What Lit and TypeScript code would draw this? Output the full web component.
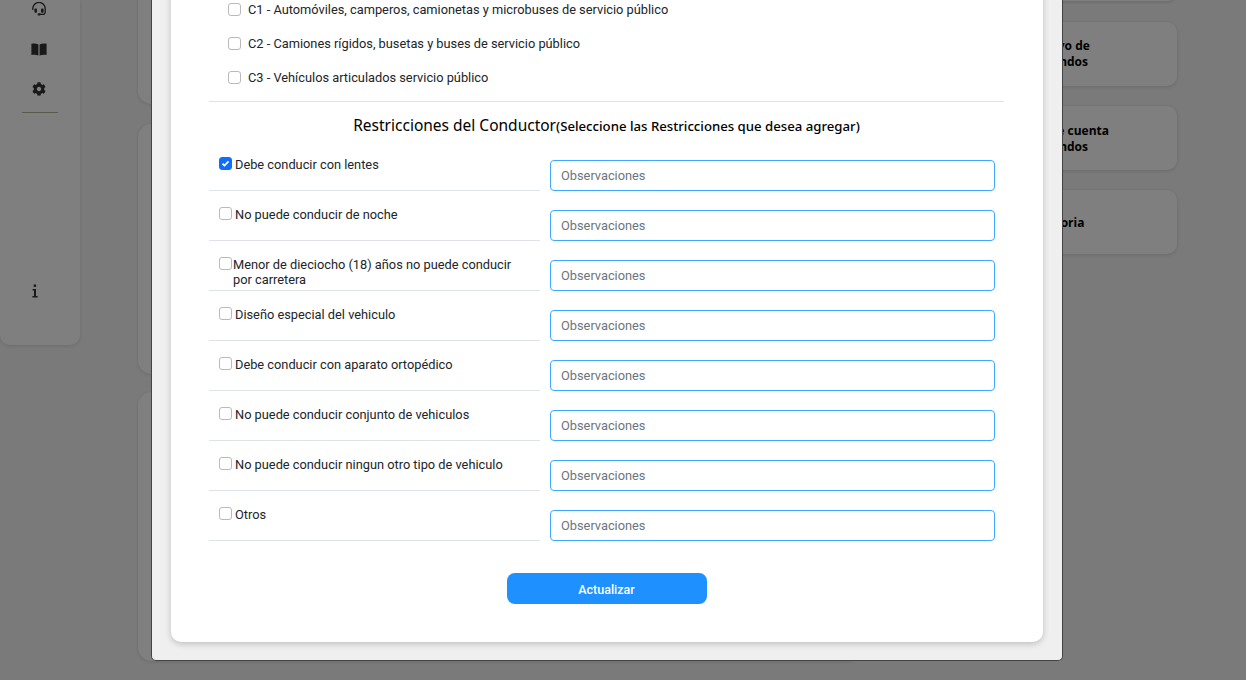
import { LitElement, html, css, svg } from "lit";
import { customElement } from "lit/decorators.js";

const licenses = [
  "C1 - Automóviles, camperos, camionetas y microbuses de servicio público",
  "C2 - Camiones rígidos, busetas y buses de servicio público",
  "C3 - Vehículos articulados servicio público",
];
const restrictions = [
  "Debe conducir con lentes",
  "No puede conducir de noche",
  "Menor de dieciocho (18) años no puede conducir por carretera",
  "Diseño especial del vehiculo",
  "Debe conducir con aparato ortopédico",
  "No puede conducir conjunto de vehiculos",
  "No puede conducir ningun otro tipo de vehiculo",
  "Otros",
];

const gear = svg`<path d="M487.4 315.7l-42.6-24.6c4.3-23.2 4.3-47 0-70.2l42.6-24.6c4.9-2.8 7.1-8.6 5.5-14-11.1-35.6-30-67.8-54.7-94.6-3.8-4.1-10-5.1-14.8-2.3L380.8 110c-17.9-15.4-38.5-27.3-60.8-35.1V25.8c0-5.6-3.9-10.5-9.4-11.7-36.7-8.2-74.3-7.8-109.2 0-5.5 1.2-9.4 6.1-9.4 11.7V75c-22.2 7.9-42.8 19.8-60.8 35.1L88.7 85.5c-4.9-2.8-11-1.9-14.8 2.3-24.7 26.7-43.6 58.9-54.7 94.6-1.7 5.4.6 11.2 5.5 14L67.3 221c-4.3 23.2-4.3 47 0 70.2l-42.6 24.6c-4.9 2.8-7.1 8.6-5.5 14 11.1 35.6 30 67.8 54.7 94.6 3.8 4.1 10 5.1 14.8 2.3l42.6-24.6c17.9 15.4 38.5 27.3 60.8 35.1v49.2c0 5.6 3.9 10.5 9.4 11.7 36.7 8.2 74.3 7.8 109.2 0 5.5-1.2 9.4-6.1 9.4-11.7v-49.2c22.2-7.9 42.8-19.8 60.8-35.1l42.6 24.6c4.9 2.8 11 1.9 14.8-2.3 24.7-26.7 43.6-58.9 54.7-94.6 1.5-5.5-.7-11.3-5.6-14.1zM256 336c-44.1 0-80-35.9-80-80s35.9-80 80-80 80 35.9 80 80-35.9 80-80 80z"/>`;

@customElement("app-root")
export class AppRoot extends LitElement {
  static styles = css`
    :host {
      display: block;
      position: relative;
      width: 1246px;
      height: 680px;
      overflow: hidden;
      font-family: Roboto, "Liberation Sans", sans-serif;
      color: #212529;
    }
    .page {
      height: 680px;
      background: #f5f5f5;
      display: grid;
      grid-template-columns: 80px 780px 317px;
      align-items: start;
      overflow: hidden;
    }
    .sidebar {
      height: 345px;
      background: #fff;
      border-radius: 0 0 10px 10px;
      box-shadow: 0 1px 4px rgba(0, 0, 0, 0.12);
      display: flex;
      flex-direction: column;
      align-items: center;
      padding-right: 2px;
      box-sizing: border-box;
    }
    .sb-icons {
      display: flex;
      flex-direction: column;
      align-items: center;
      padding-top: 2px;
    }
    .sb-icons svg {
      display: block;
      fill: #333;
    }
    .sb-icons .book { margin-top: 27px; }
    .sb-icons .cog { margin-top: 26px; }
    .sb-rule {
      width: 36px;
      height: 1px;
      background: #b4b49a;
      margin: 16px 0 0 2px;
    }
    .sb-info {
      align-self: flex-start;
      margin: 171px 0 0 32px;
      fill: #333;
      display: block;
    }
    .col {
      margin: -60px 0 0 58px;
      width: 722px;
      display: flex;
      flex-direction: column;
      gap: 20px;
    }
    .bgcard {
      background: #fff;
      border-radius: 14px;
      box-shadow: 0 1px 4px rgba(0, 0, 0, 0.12);
    }
    .col .a { height: 164px; }
    .col .b { height: 250px; }
    .col .c { height: 269px; margin-top: -2px; }
    .right {
      margin: -62.8px 0 0 10px;
      width: 307px;
      display: flex;
      flex-direction: column;
      gap: 20.4px;
    }
    .tile {
      height: 64px;
      box-sizing: border-box;
      padding: 1px 0 0 151px;
      display: flex;
      flex-direction: column;
      justify-content: center;
      background: #fff;
      border-radius: 10px;
      box-shadow: 0 1px 4px rgba(0, 0, 0, 0.14);
      font: 700 12px/16px "Open Sans", sans-serif;
      color: #000;
      white-space: nowrap;
    }
    .tile.lower {
      padding-top: 2px;
    }
    .tile.single {
      padding: 2px 0 0 158px;
    }
    .tile .l2 {
      padding-left: 2px;
    }
    .overlay {
      position: absolute;
      inset: 0;
      background: rgba(0, 0, 0, 0.5);
      display: flex;
      align-items: flex-end;
      padding: 0 0 19px 151px;
      overflow: hidden;
    }
    .dialog {
      flex: none;
      width: 912px;
      box-sizing: border-box;
      background: #efefef;
      border: 1px solid #444;
      border-top: 0;
      border-radius: 0 0 5px 5px;
      padding: 0 19px 18px;
    }
    .panel {
      background: #fff;
      border-radius: 0 0 10px 10px;
      box-shadow: 0 2px 6px rgba(0, 0, 0, 0.2);
      padding: 0 39px 38px 38px;
      font-size: 12.8px;
    }
    .lic {
      display: flex;
      align-items: center;
      gap: 7px;
      height: 34px;
      padding-left: 19px;
    }
    .lic-list {
      margin-top: -8px;
      padding-bottom: 7px;
      border-bottom: 1px solid #dee2e6;
    }
    .box {
      flex: none;
      width: 13px;
      height: 13px;
      box-sizing: border-box;
      border: 1px solid #b9b9b9;
      border-radius: 3px;
      background: #fff;
      display: flex;
      align-items: center;
      justify-content: center;
    }
    .box.on {
      background: #0d6efd;
      border-color: #0d6efd;
    }
    .box svg {
      display: block;
    }
    h3 {
      margin: 0;
      padding: 13px 0 4px;
      text-align: center;
      font: 400 15.5px/21px "Noto Sans", sans-serif;
      color: #000;
    }
    h3 small {
      font: 500 13.2px/21px "Noto Sans", sans-serif;
    }
    .rows {
      display: flex;
      flex-direction: column;
    }
    .row {
      display: grid;
      grid-template-columns: 331px 445px;
      column-gap: 10px;
      height: 50px;
    }
    .check {
      border-bottom: 1px solid #dee2e6;
      height: 50px;
      box-sizing: border-box;
      padding: 16px 0 0 10px;
      display: flex;
      align-items: flex-start;
      gap: 3px;
    }
    .check span.t {
      display: block;
      line-height: 15px;
    }
    .check.two span.t {
      margin-left: -2px;
      width: 285px;
    }
    input {
      align-self: end;
      box-sizing: border-box;
      width: 445px;
      height: 31px;
      border: 1px solid #40a9ff;
      border-radius: 4px;
      padding: 0 10px;
      outline: 0;
      font: 400 12.8px Roboto, sans-serif;
      color: #212529;
      background: #fff;
    }
    input::placeholder {
      color: #6c757d;
      opacity: 1;
    }
    .actions {
      display: flex;
      justify-content: center;
      margin-top: 32px;
    }
    button {
      width: 200px;
      height: 31px;
      border: 0;
      border-radius: 8px;
      background: #1e90ff;
      color: #fff;
      font: 500 12.5px Roboto, sans-serif;
      padding: 2px 0 0;
    }
  `;

  render() {
    return html`
      <div class="page">
        <aside class="sidebar">
          <div class="sb-icons">
            <svg width="16" height="14" viewBox="0 0 16 14">
              <path fill="none" stroke="#333" stroke-width="1.3" d="M1.8 8V6.6a6.2 6.2 0 0 1 12.4 0V10a2.4 2.4 0 0 1-2.4 2.4H9" />
              <rect x="3.4" y="6.4" width="2.6" height="4.4" rx="1" />
              <rect x="10" y="6.4" width="2.6" height="4.4" rx="1" />
              <rect x="6.6" y="11.2" width="3" height="2.4" rx="1" />
            </svg>
            <svg class="book" width="16" height="13" viewBox="0 0 16 13">
              <path d="M0.4 0.8C2.5 0.3 5.5 0.3 7.4 1.4V12.6C5.5 11.8 2.5 11.6 0.4 12Z" />
              <path d="M15.6 0.8C13.5 0.3 10.5 0.3 8.6 1.4V12.6C10.5 11.8 13.5 11.6 15.6 12Z" />
            </svg>
            <svg class="cog" width="14" height="14" viewBox="0 0 512 512">${gear}</svg>
          </div>
          <div class="sb-rule"></div>
          <svg class="sb-info" width="6" height="14" viewBox="0 0 6 14">
            <rect x="1.7" y="0.5" width="2.4" height="2.4" />
            <path d="M0.6 5H4V12H5.6V13.4H0.4V12H2V6.4H0.6Z" />
          </svg>
        </aside>
        <section class="col">
          <div class="bgcard a"></div>
          <div class="bgcard b"></div>
          <div class="bgcard c"></div>
        </section>
        <section class="right">
          <div class="tile"></div>
          <div class="tile"><div>Objetivo de</div><div class="l2">Mis fondos</div></div>
          <div class="tile lower"><div>Tipo de cuenta</div><div class="l2">Mis fondos</div></div>
          <div class="tile single"><div>Auditoria</div></div>
        </section>
      </div>
      <div class="overlay">
        <div class="dialog">
          <div class="panel">
            <div class="lic-list">
              ${licenses.map(
                (l) => html`<div class="lic"><span class="box"></span><span>${l}</span></div>`
              )}
            </div>
            <h3>Restricciones del Conductor<small>(Seleccione las Restricciones que desea agregar)</small></h3>
            <div class="rows">
              ${restrictions.map(
                (r, i) => html`
                  <div class="row">
                    <div class="check ${i === 2 ? "two" : ""}">
                      <span class="box ${i === 0 ? "on" : ""}">
                        ${i === 0
                          ? html`<svg width="9" height="9" viewBox="0 0 9 9"><path d="M1.5 4.6L3.5 6.6L7.5 2.4" fill="none" stroke="#fff" stroke-width="1.7" /></svg>`
                          : ""}
                      </span>
                      <span class="t">${r}</span>
                    </div>
                    <input placeholder="Observaciones" />
                  </div>
                `
              )}
            </div>
            <div class="actions"><button>Actualizar</button></div>
          </div>
        </div>
      </div>
    `;
  }
}
